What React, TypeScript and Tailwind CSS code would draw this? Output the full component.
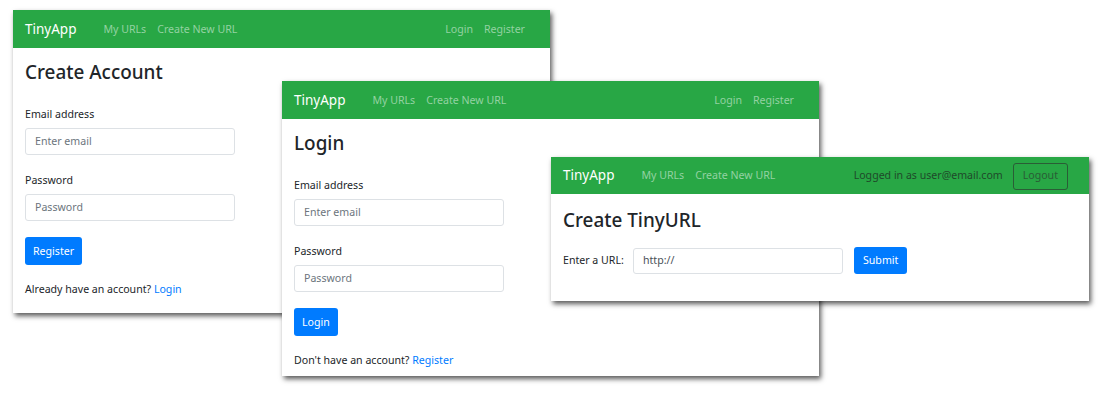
import type { ReactNode } from 'react';

const font = { fontFamily: '"Noto Sans", "Open Sans", sans-serif' };

function Navbar({ right }: { right: ReactNode }) {
  return (
    <div className="h-[38px] bg-[#28a745] flex items-center pt-[2px] pl-[12px] pr-[25px]">
      <span className="text-white text-[13.5px] leading-none mr-[27px]">TinyApp</span>
      <div className="flex gap-[11px] text-[10.6px] text-[#93d2a2]">
        <span>My URLs</span>
        <span>Create New URL</span>
      </div>
      <div className="ml-auto flex items-center">{right}</div>
    </div>
  );
}

function GuestLinks() {
  return (
    <div className="flex gap-[11px] text-[10.6px] text-[#93d2a2]">
      <span>Login</span>
      <span>Register</span>
    </div>
  );
}

function Field({ label, placeholder, first }: { label: string; placeholder: string; first?: boolean }) {
  return (
    <div className={first ? 'mt-[22px]' : 'mt-[17px]'}>
      <div className="text-[10.6px] leading-[17px] text-[#212529]">{label}</div>
      <div className="mt-[5px] w-[210px] h-[27px] border border-[#dde1e5] rounded-[3px] flex items-center px-[9px] pt-[1px] text-[10.6px] text-[#6c757d]">
        {placeholder}
      </div>
    </div>
  );
}

function AuthWindow({
  title,
  button,
  prompt,
  link,
  className,
  bottom,
}: {
  title: string;
  button: string;
  prompt: string;
  link: string;
  className: string;
  bottom: string;
}) {
  return (
    <div className={`absolute w-[537px] bg-white shadow-[2px_3px_5px_rgba(0,0,0,0.65)] ${className}`} style={font}>
      <Navbar right={<GuestLinks />} />
      <div className={`px-[12px] ${bottom}`}>
        <h3 className="mt-[12px] h-[24px] leading-[24px] text-[18.9px] font-medium text-[#212529]">{title}</h3>
        <Field label="Email address" placeholder="Enter email" first />
        <Field label="Password" placeholder="Password" />
        <button className="mt-[16px] h-[28px] px-[8px] rounded-[3px] bg-[#007bff] text-white text-[10.6px] leading-none">
          {button}
        </button>
        <div className="mt-[16px] text-[10.6px] leading-[17px] text-[#212529]">
          {prompt} <span className="text-[#007bff]">{link}</span>
        </div>
      </div>
    </div>
  );
}

export default function App() {
  return (
    <div className="relative w-[1100px] h-[400px] bg-white overflow-hidden">
      <AuthWindow
        className="left-[13px] top-[10px]"
        bottom="pb-[15px]"
        title="Create Account"
        button="Register"
        prompt="Already have an account?"
        link="Login"
      />
      <AuthWindow
        className="left-[282px] top-[81px]"
        bottom="pb-[7px]"
        title="Login"
        button="Login"
        prompt="Don't have an account?"
        link="Register"
      />
      <div className="absolute left-[551px] top-[157px] w-[538px] h-[144px] bg-white shadow-[2px_3px_5px_rgba(0,0,0,0.65)]" style={font}>
        <div className="h-[37px] bg-[#28a745] flex items-center pt-[1px] pl-[12px] pr-[21px]">
          <span className="text-white text-[13.5px] leading-none mr-[27px]">TinyApp</span>
          <div className="flex gap-[11px] text-[10.6px] text-[#93d2a2]">
            <span>My URLs</span>
            <span>Create New URL</span>
          </div>
          <div className="ml-auto flex items-center gap-[10px]">
            <span className="text-[10.6px] text-[#1f4a2a]">Logged in as user@email.com</span>
            <span className="h-[27px] px-[9px] flex items-center border border-[#2a5d36] rounded-[3px] text-[10.6px] text-[#2a5d36]">
              Logout
            </span>
          </div>
        </div>
        <div className="px-[12px]">
          <h3 className="mt-[14px] h-[24px] leading-[24px] text-[18.9px] font-medium text-[#212529]">Create TinyURL</h3>
          <div className="mt-[15px] flex items-center">
            <span className="text-[10.6px] text-[#212529] w-[70px]">Enter a URL:</span>
            <div className="w-[210px] h-[26px] border border-[#dde1e5] rounded-[3px] flex items-center px-[9px] text-[10.6px] text-[#495057]">
              http://
            </div>
            <button className="ml-[11px] h-[27px] px-[9px] rounded-[3px] bg-[#007bff] text-white text-[10.6px] leading-none">
              Submit
            </button>
          </div>
        </div>
      </div>
    </div>
  );
}
